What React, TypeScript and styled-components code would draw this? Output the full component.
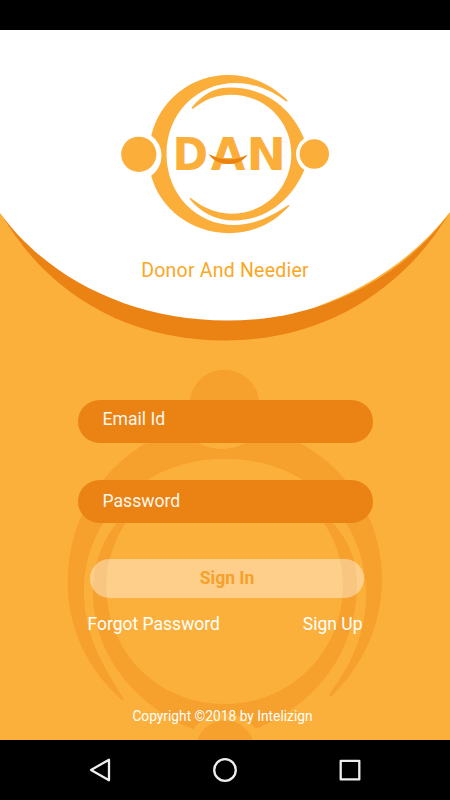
import React from 'react';
import styled, { createGlobalStyle } from 'styled-components';

const GlobalStyle = createGlobalStyle`
  * { box-sizing: border-box; }
  body { margin: 0; background: #000; font-family: Roboto, sans-serif; }
`;

const Phone = styled.div`
  width: 450px;
  height: 800px;
  display: flex;
  flex-direction: column;
  background: #000;
  overflow: hidden;
`;

const StatusBar = styled.div`
  height: 30px;
  flex: none;
`;

const Screen = styled.main`
  position: relative;
  height: 710px;
  flex: none;
  display: flex;
  flex-direction: column;
  background: #fcb03c;
  overflow: hidden;
`;

const Backdrop = styled.svg`
  position: absolute;
  inset: 0;
  width: 450px;
  height: 710px;
`;

const Header = styled.header`
  position: relative;
  height: 370px;
  padding-top: 40px;
  display: flex;
  flex-direction: column;
  align-items: center;
`;

const Logo = styled.svg`
  display: block;
  width: 220px;
  height: 170px;
`;

const Tagline = styled.h1`
  margin: 18px 0 0;
  font-size: 19.5px;
  line-height: 26px;
  font-weight: 400;
  letter-spacing: 0.22px;
  color: #fba724;
  white-space: nowrap;
`;

const Form = styled.form`
  position: relative;
  display: flex;
  flex-direction: column;
  padding: 0 77.5px;
`;

const Field = styled.input<{ $lift?: number }>`
  height: 42.5px;
  width: 295px;
  margin: 0 0 37.5px;
  padding: 0 25px ${(p) => p.$lift ?? 0}px;
  border: 0;
  border-radius: 22px;
  background: #ea8214;
  font: 400 17.6px/22px Roboto, sans-serif;
  color: #fff;
  outline: none;
  &::placeholder { color: #fff6ec; opacity: 1; }
`;

const SignIn = styled.button`
  width: 274px;
  height: 39px;
  margin: -1px 0 0 12.5px;
  padding: 0 0 1px;
  border: 0;
  border-radius: 20px;
  background: rgba(255, 255, 255, 0.4);
  font: 700 17.5px/22px Roboto, sans-serif;
  color: #f6a02d;
`;

const Links = styled.nav`
  display: flex;
  justify-content: space-between;
  margin: 15px 10px 0;
`;

const TextLink = styled.a`
  font-size: 17.5px;
  line-height: 22px;
  color: #fff;
  white-space: nowrap;
`;

const Copyright = styled.footer`
  position: relative;
  margin-top: 72px;
  padding-right: 5px;
  text-align: center;
  font-size: 13.75px;
  line-height: 18px;
  color: #fff;
`;

const NavBar = styled.div`
  height: 60px;
  flex: none;
  display: flex;
  justify-content: space-between;
  align-items: center;
  padding: 0 85px;
`;

const NavIcon = styled.svg`
  width: 30px;
  height: 30px;
  fill: none;
  stroke: #eee;
  stroke-width: 2.3;
  stroke-linejoin: round;
`;

const Emblem = () => (
  <>
    <circle cx="138.8" cy="154.3" r="17.6" />
    <circle cx="314.3" cy="154" r="14.7" />
    <path d="M151.3 135.4 C160 100 191 75 228 75 C253 75 273 86 287.4 100.3 Q287.5 101.8 286.2 101.5 C271 90 254 83 236 83 C196 83 166.5 114 166.5 154 C166.5 194 196 225 234 225 C254 225 270 217 288.5 205 Q289.6 205 289.2 206 C273 224 252 233.2 229 233.2 C192 233.2 160 209 151.2 175.8 A25 25 0 0 0 151.3 135.4Z" />
    <path d="M191.5 107.8 C202 95 214 87.6 230 87.6 C264 87.6 291 107 304 138.5 A19.3 19.3 0 0 0 304.3 170 C291 201 265 220.5 234 220.5 C216 220.5 200 212 189.4 198.7 Q189.5 197.5 191 198.3 C201 206 214 213.7 231 213.7 C265 213.7 291.3 188 291.3 154 C291.3 121 265 94.7 231 94.7 C216 94.7 205 99.5 192.5 109Z" />
  </>
);

export default function App() {
  return (
    <>
      <GlobalStyle />
      <Phone>
        <StatusBar />
        <Screen>
          <Backdrop viewBox="0 30 450 710" aria-hidden="true">
            <g fill="#f6a02d" transform="matrix(0 1.965 -1.987 0 531 131.5)">
              <Emblem />
            </g>
            <path fill="#ea8214" d="M0 212 C47 294 127 340.5 225 340.5 C323 340.5 403 291 450 212Z" />
            <path fill="#fbb03c" d="M310 309.3 C370 291 416 258.5 450 212.5 L445 212 L310 303Z" />
            <path fill="#fff" d="M0 30H450V212C415 257 368 288 316 307C286 317 256 320.5 227 320.5C132 320.5 48 279 0 213Z" />
          </Backdrop>
          <Header>
            <Logo viewBox="115 70 220 170" fill="#fbae3a" role="img" aria-label="DAN logo">
              <Emblem />
              <g fontFamily="DejaVu Sans" fontWeight="700" fontSize="44.8">
                <text x="172.4" y="169.7" textLength="35.6" lengthAdjust="spacingAndGlyphs">D</text>
                <text x="210.8" y="169.7">A</text>
                <text x="246.4" y="169.7" textLength="39.5" lengthAdjust="spacingAndGlyphs">N</text>
              </g>
              <path fill="#ea8214" d="M208.8 154 Q228 164.5 247.8 154.4 C244 160 238 163.9 229 163.9 C219 163.9 212 160 208.8 154Z" />
            </Logo>
            <Tagline>Donor And Needier</Tagline>
          </Header>
          <Form>
            <Field placeholder="Email Id" aria-label="Email Id" $lift={5} />
            <Field type="password" placeholder="Password" aria-label="Password" />
            <SignIn type="button">Sign In</SignIn>
            <Links>
              <TextLink>Forgot Password</TextLink>
              <TextLink>Sign Up</TextLink>
            </Links>
          </Form>
          <Copyright>Copyright ©2018 by Intelizign</Copyright>
        </Screen>
        <NavBar>
          <NavIcon viewBox="0 0 30 30"><path d="M6 15 L24 4.7 V25.3Z" /></NavIcon>
          <NavIcon viewBox="0 0 30 30"><circle cx="15" cy="15" r="10.8" /></NavIcon>
          <NavIcon viewBox="0 0 30 30"><rect x="5.7" y="5.8" width="18.6" height="18.6" /></NavIcon>
        </NavBar>
      </Phone>
    </>
  );
}
